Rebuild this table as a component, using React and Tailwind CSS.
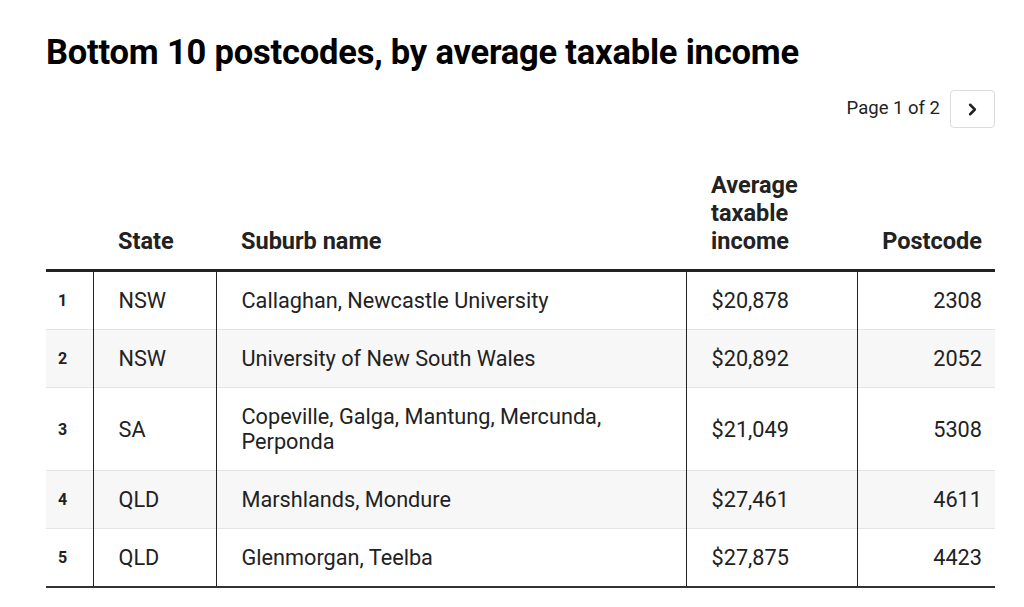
import { ChevronRight } from "lucide-react";

const rows = [
  { rank: 1, state: "NSW", suburb: "Callaghan, Newcastle University", income: "$20,878", postcode: "2308" },
  { rank: 2, state: "NSW", suburb: "University of New South Wales", income: "$20,892", postcode: "2052" },
  { rank: 3, state: "SA", suburb: "Copeville, Galga, Mantung, Mercunda, Perponda", income: "$21,049", postcode: "5308" },
  { rank: 4, state: "QLD", suburb: "Marshlands, Mondure", income: "$27,461", postcode: "4611" },
  { rank: 5, state: "QLD", suburb: "Glenmorgan, Teelba", income: "$27,875", postcode: "4423" },
];

const App = () => {
  return (
    <div className="min-h-screen bg-white pl-[46px] pt-[30px] font-['Roboto',sans-serif] text-[#222]">
      <h1 className="text-[34.5px] font-bold leading-[44px] tracking-[-0.2px] text-black">
        Bottom 10 postcodes, by average taxable income
      </h1>

      {/* Pagination */}
      <div className="mt-[16px] flex w-[949px] items-center justify-end gap-[10px]">
        <span className="text-[18.5px]">Page 1 of 2</span>
        <button className="flex h-[38px] w-[45px] items-center justify-center rounded-[4px] border border-[#dcdcdc] bg-white">
          <ChevronRight size={19} strokeWidth={3.2} />
        </button>
      </div>

      <table className="mt-[43px] w-[949px] border-collapse text-left">
        <thead>
          <tr className="border-b-[3px] border-[#222] align-bottom text-[23.5px] font-bold leading-[28px]">
            <th className="w-[47px]"></th>
            <th className="w-[123px] pb-[14px] pl-[25px]">State</th>
            <th className="w-[470px] pb-[14px] pl-[25px]">Suburb name</th>
            <th className="w-[171px] pb-[14px] pl-[25px] pr-[40px]">Average taxable income</th>
            <th className="w-[138px] pb-[14px] pr-[13px] text-right">Postcode</th>
          </tr>
        </thead>
        <tbody className="text-[21.7px] leading-[25px]">
          {rows.map((r, i) => (
            <tr
              key={r.rank}
              className={`border-b ${i === rows.length - 1 ? "border-b-2 border-b-[#333]" : "border-[#e4e4e4]"} ${
                i % 2 === 1 ? "bg-[#f7f7f7]" : "bg-white"
              }`}
            >
              <td className="py-4 pl-[12px] text-[16px] font-bold">{r.rank}</td>
              <td className="border-l border-[#222] py-4 pl-[25px]">{r.state}</td>
              <td className="border-l border-[#222] py-4 pl-[25px] pr-[60px]">{r.suburb}</td>
              <td className="border-l border-[#222] py-4 pl-[25px]">{r.income}</td>
              <td className="border-l border-[#222] py-4 pr-[13px] text-right">{r.postcode}</td>
            </tr>
          ))}
        </tbody>
      </table>
    </div>
  );
};

export default App;
